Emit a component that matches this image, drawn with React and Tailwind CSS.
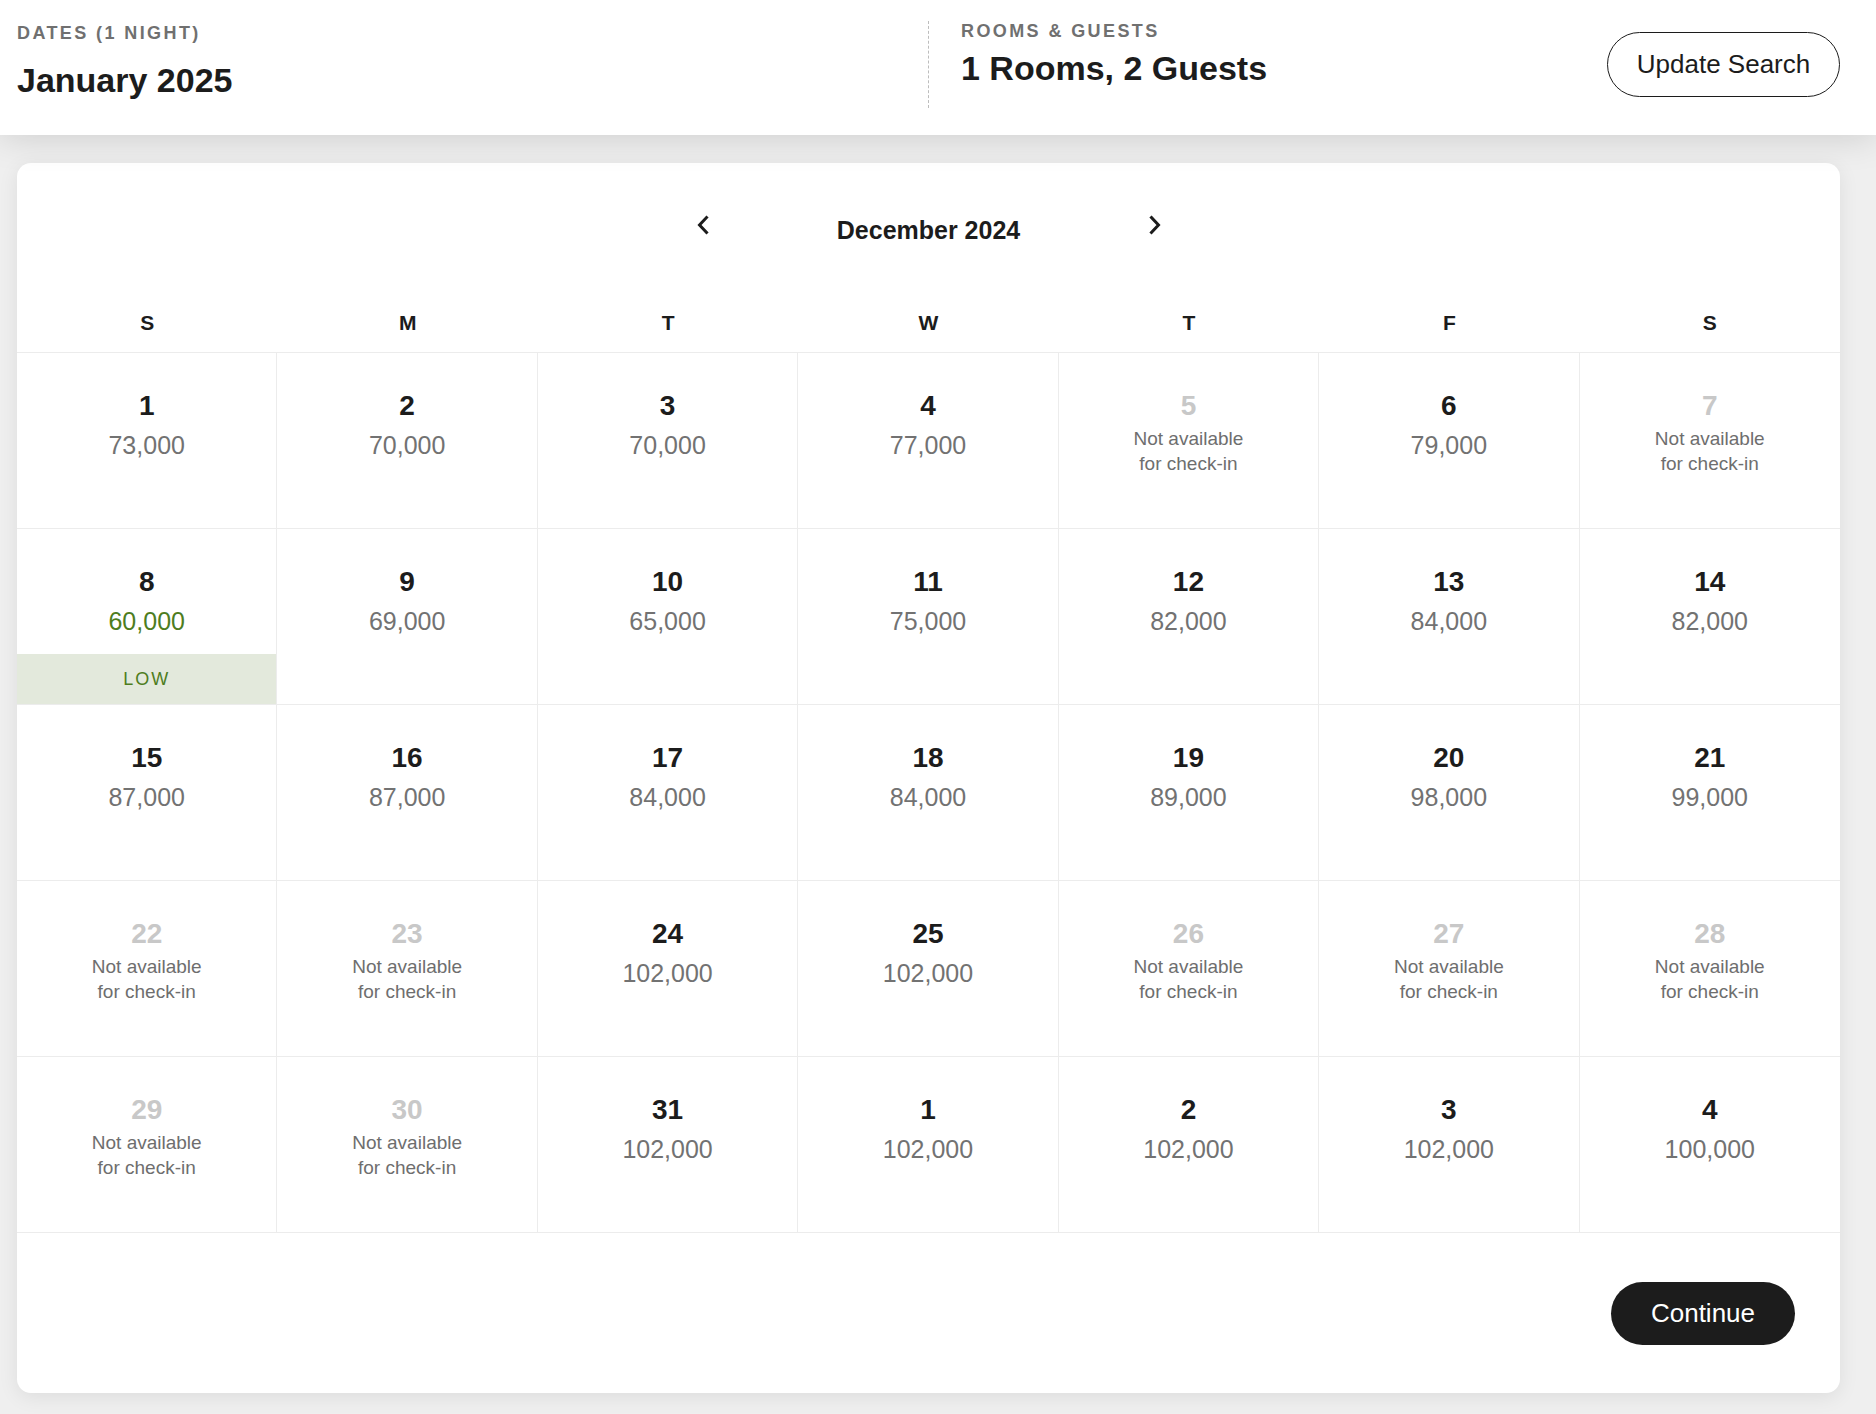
import React from "react";

const NA = null;
const rows = [
  [[1, "73,000"], [2, "70,000"], [3, "70,000"], [4, "77,000"], [5, NA], [6, "79,000"], [7, NA]],
  [[8, "60,000", "low"], [9, "69,000"], [10, "65,000"], [11, "75,000"], [12, "82,000"], [13, "84,000"], [14, "82,000"]],
  [[15, "87,000"], [16, "87,000"], [17, "84,000"], [18, "84,000"], [19, "89,000"], [20, "98,000"], [21, "99,000"]],
  [[22, NA], [23, NA], [24, "102,000"], [25, "102,000"], [26, NA], [27, NA], [28, NA]],
  [[29, NA], [30, NA], [31, "102,000"], [1, "102,000"], [2, "102,000"], [3, "102,000"], [4, "100,000"]],
];

const days = ["S", "M", "T", "W", "T", "F", "S"];

function Chevron({ dir }) {
  return (
    <svg width="14" height="20" viewBox="0 0 14 20" fill="none" className="block">
      {dir === "left" ? (
        <path d="M10.5 2.5 L3.5 10 L10.5 17.5" stroke="#1c1c1c" strokeWidth="3" strokeLinecap="square" strokeLinejoin="miter" />
      ) : (
        <path d="M3.5 2.5 L10.5 10 L3.5 17.5" stroke="#1c1c1c" strokeWidth="3" strokeLinecap="square" strokeLinejoin="miter" />
      )}
    </svg>
  );
}

function Cell({ day, price, tag, last }) {
  const unavailable = price === null;
  return (
    <div
      className={
        "h-[176px] flex flex-col items-center pt-[36px] border-b border-[#ececec] " +
        (last ? "" : "border-r")
      }
    >
      <div
        className={
          "text-[28px] leading-[34px] font-bold " +
          (unavailable ? "text-[#c8c8c8]" : "text-[#1c1c1c]")
        }
      >
        {day}
      </div>
      {unavailable ? (
        <div className="mt-[3px] text-[19px] leading-[25px] text-[#6e6e6e] text-center">
          Not available
          <br />
          for check-in
        </div>
      ) : (
        <div
          className={
            "mt-[7px] text-[25px] leading-[30px] " +
            (tag === "low" ? "text-[#4e7d1e]" : "text-[#727272]")
          }
        >
          {price}
        </div>
      )}
      {tag === "low" && (
        <div className="mt-auto w-full h-[50px] bg-[#e3e9dc] flex items-center justify-center text-[18px] tracking-[2px] text-[#4e7d1e]">
          LOW
        </div>
      )}
    </div>
  );
}

export default function App() {
  return (
    <div
      className="min-h-screen bg-[#efefef] text-[#1c1c1c]"
      style={{ fontFamily: '"Liberation Sans", Arial, sans-serif' }}
    >
      <header className="relative z-10 h-[135px] bg-white shadow-[0_0_36px_rgba(0,0,0,0.16)] flex items-start pl-[17px] pr-[36px]">
        <div className="w-[911px] pt-[22px]">
          <div className="text-[18px] leading-[22px] font-bold tracking-[2.4px] text-[#707070]">
            DATES (1 NIGHT)
          </div>
          <div className="mt-[16px] text-[34px] leading-[40px] font-bold">January 2025</div>
        </div>
        <div className="mt-[21px] h-[87px] border-l border-dashed border-[#bdbdbd]" />
        <div className="pl-[32px] pt-[20px]">
          <div className="text-[18px] leading-[22px] font-bold tracking-[2.4px] text-[#707070]">
            ROOMS &amp; GUESTS
          </div>
          <div className="mt-[6px] text-[34px] leading-[40px] font-bold">1 Rooms, 2 Guests</div>
        </div>
        <button className="ml-auto mt-[32px] h-[65px] w-[233px] rounded-full border border-[#1c1c1c] bg-white text-[26px] text-[#1c1c1c]">
          Update Search
        </button>
      </header>

      <div className="pl-[17px] pr-[36px] pt-[28px] pb-[20px]">
        <div className="bg-white rounded-[14px] shadow-[0_4px_20px_rgba(0,0,0,0.08)] overflow-hidden">
          <div className="flex justify-center items-start pt-[52px]">
            <button className="w-[14px] h-[20px]">
              <Chevron dir="left" />
            </button>
            <div className="w-[438px] text-center text-[25px] leading-[30px] font-bold">December 2024</div>
            <button className="w-[14px] h-[20px]">
              <Chevron dir="right" />
            </button>
          </div>

          <div className="grid grid-cols-7 mt-[64px] pb-[15px]">
            {days.map((d, i) => (
              <div key={i} className="text-center text-[21px] leading-[28px] font-bold">
                {d}
              </div>
            ))}
          </div>

          <div className="grid grid-cols-7 border-t border-[#ececec]">
            {rows.map((row, ri) =>
              row.map(([day, price, tag], ci) => (
                <Cell key={ri + "-" + ci} day={day} price={price} tag={tag} last={ci === 6} />
              ))
            )}
          </div>

          <div className="flex justify-end pt-[49px] pb-[48px] pr-[45px]">
            <button className="h-[63px] w-[184px] rounded-full bg-[#1c1c1c] text-white text-[26px]">
              Continue
            </button>
          </div>
        </div>
      </div>
    </div>
  );
}
